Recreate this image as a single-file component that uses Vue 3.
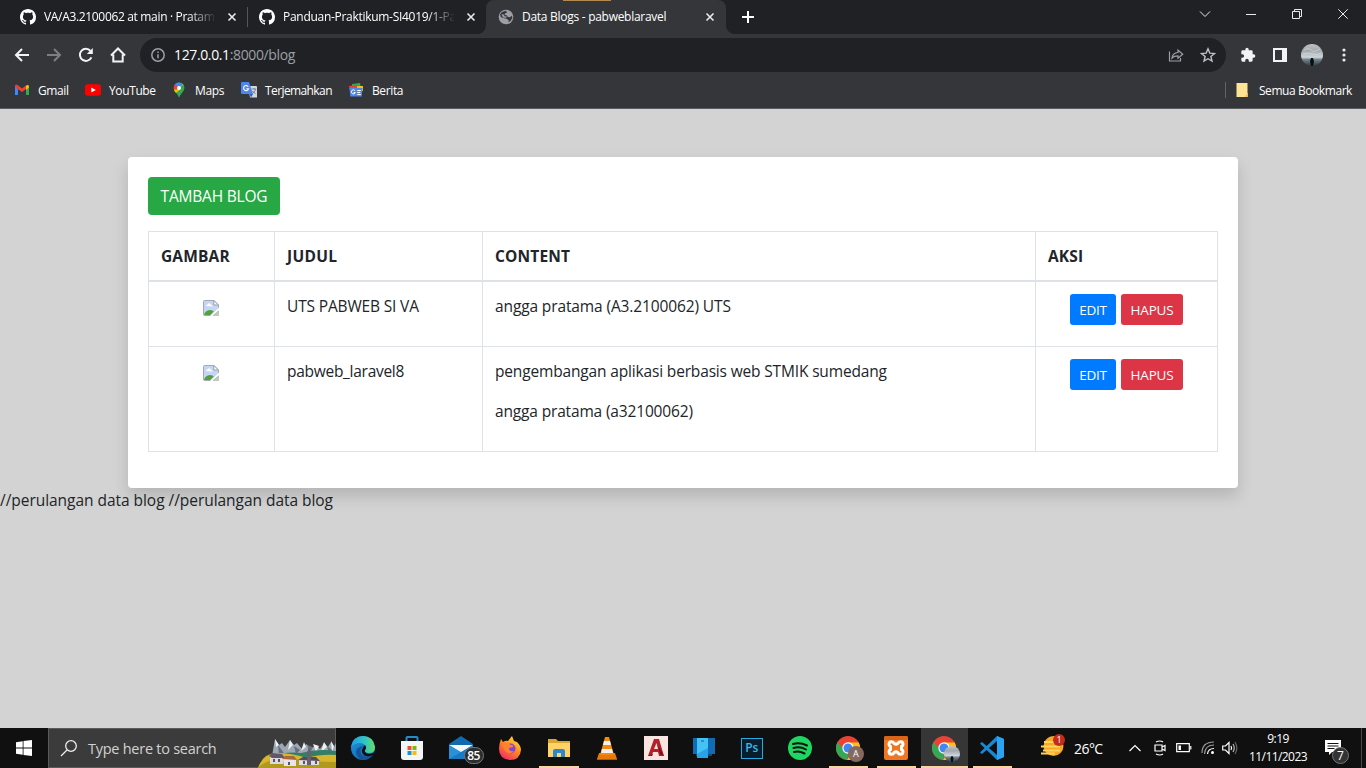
<script setup>
const blogs = [
  { title: 'UTS PABWEB SI VA', lines: [{ t: 'angga pratama (A3.2100062) UTS', w: 'l1' }] },
  {
    title: 'pabweb_laravel8',
    lines: [
      { t: 'pengembangan aplikasi berbasis web STMIK sumedang', w: 'l2' },
      { t: 'angga pratama (a32100062)', w: 'l3' },
    ],
  },
]
const github =
  'M8 0C3.58 0 0 3.58 0 8c0 3.54 2.29 6.53 5.47 7.59.4.07.55-.17.55-.38 0-.19-.01-.82-.01-1.49-2.01.37-2.53-.49-2.69-.94-.09-.23-.48-.94-.82-1.13-.28-.15-.68-.52-.01-.53.63-.01 1.08.58 1.23.82.72 1.21 1.87.87 2.33.66.07-.52.28-.87.51-1.07-1.78-.2-3.64-.89-3.64-3.95 0-.87.31-1.59.82-2.15-.08-.2-.36-1.02.08-2.12 0 0 .67-.21 2.2.82.64-.18 1.32-.27 2-.27s1.36.09 2 .27c1.53-1.04 2.2-.82 2.2-.82.44 1.1.16 1.92.08 2.12.51.56.82 1.27.82 2.15 0 3.07-1.87 3.75-3.65 3.95.29.25.54.73.54 1.48 0 1.07-.01 1.93-.01 2.2 0 .21.15.46.55.38A8.01 8.01 0 0 0 16 8c0-4.42-3.58-8-8-8z'
</script>

<template>
  <div class="screen">
    <header class="browser">
      <div class="tabs">
        <div class="tab first">
          <svg class="fav" viewBox="0 0 16 16"><path :d="github" fill="#fff" /></svg>
          <span class="tab-title fade t1">VA/A3.2100062 at main · Pratam</span>
          <svg class="close" viewBox="0 0 10 10"><path d="M1.500 1.500l7 7M8.500 1.500l-7 7" /></svg>
        </div>
        <div class="tab second">
          <svg class="fav" viewBox="0 0 16 16"><path :d="github" fill="#fff" /></svg>
          <span class="tab-title fade t2">Panduan-Praktikum-SI4019/1-Pa</span>
          <svg class="close" viewBox="0 0 10 10"><path d="M1.500 1.500l7 7M8.500 1.500l-7 7" /></svg>
        </div>
        <div class="tab active">
          <i class="accent"></i>
          <svg class="globe" viewBox="0 0 16 16">
            <circle cx="8" cy="8" r="7.300" fill="#9aa0a6" />
            <path d="M2 5.500L4 3l4-1.200 1 1.700-2 1-.5 1.500 2 .2L10 8l2 .3 1.800-1.600.6 2-1.900 3.300-2 1.200.2-2-2-1.500L5.500 9 3 8.200z" fill="#35363a" />
            <path d="M3.500 5.500l2-.2 1 2 2.500.2-1 1.200-3-.3z" fill="#9aa0a6" />
          </svg>
          <span class="tab-title t3">Data Blogs - pabweblaravel</span>
          <svg class="close" viewBox="0 0 10 10"><path d="M1.500 1.500l7 7M8.500 1.500l-7 7" /></svg>
        </div>
        <svg class="plus" viewBox="0 0 14 14"><path d="M7 1v12M1 7h12" stroke="#fff" stroke-width="2" /></svg>
        <div class="window-controls">
          <svg width="12" height="12" viewBox="0 0 12 12"><path d="M1 3.500L6 8.500l5-5" /></svg>
          <svg width="12" height="12" viewBox="0 0 12 12"><path d="M1 6.500h10" /></svg>
          <svg width="12" height="12" viewBox="0 0 12 12"><path d="M1.500 3.500h7v7h-7zM3.500 3.500v-2h7v7h-2" /></svg>
          <svg width="12" height="12" viewBox="0 0 12 12"><path d="M1.300 1.300l9.400 9.400M10.700 1.300l-9.400 9.400" /></svg>
        </div>
      </div>

      <div class="toolbar">
        <svg class="nav" viewBox="0 0 16 16"><path d="M15 8H2M8 2L2 8l6 6" stroke="#f1f3f4" /></svg>
        <svg class="nav" viewBox="0 0 16 16"><path d="M1 8h13M8 2l6 6-6 6" stroke="#7d7f83" /></svg>
        <svg class="nav" viewBox="0 0 16 16"><path d="M13.400 10.300A6 6 0 1 1 12.500 4" stroke="#f1f3f4" /><path d="M14.800 1v6H8.800z" fill="#f1f3f4" stroke="none" /></svg>
        <svg class="nav" viewBox="0 0 16 16"><path d="M1 8.500L8 1.500l7 7M3.300 7.500v7h9.400v-7" stroke="#f1f3f4" /></svg>
        <div class="address">
          <svg class="info" viewBox="0 0 14 14"><circle cx="7" cy="7" r="6.200" /><path d="M7 6.300v4M7 3.500v1.500" /></svg>
          <span class="url"><b>127.0.0.1</b>:8000/blog</span>
          <svg class="share" viewBox="0 0 16 16"><path d="M1.500 4.500v9.500h11v-3M4 11c.4-3.700 2.500-5.300 6-5.500V3l4.700 4.300L10 11.300V8.800C7.300 8.800 5.500 9.300 4 11z" /></svg>
          <svg class="star" viewBox="0 0 16 16"><path d="M8 1.800l1.800 4.300 4.700.4-3.600 3 1.100 4.600L8 11.700l-4 2.400 1.100-4.600-3.600-3 4.700-.4z" /></svg>
        </div>
        <svg class="puzzle" viewBox="0 0 24 24"><path d="M20.500 11H19V7a2 2 0 0 0-2-2h-4V3.500a2.500 2.500 0 0 0-5 0V5H4a2 2 0 0 0-2 2v3.800h1.500a2.700 2.700 0 0 1 0 5.400H2V20a2 2 0 0 0 2 2h3.800v-1.500a2.700 2.700 0 0 1 5.400 0V22H17a2 2 0 0 0 2-2v-4h1.500a2.500 2.500 0 0 0 0-5z" fill="#f1f3f4" /></svg>
        <svg class="panel" viewBox="0 0 14 14"><path d="M1 1h12v12H1z" fill="none" stroke="#f1f3f4" stroke-width="2" /><path d="M9 1h4v12H9z" fill="#f1f3f4" /></svg>
        <svg class="avatar" viewBox="0 0 22 22">
          <defs>
            <clipPath id="av"><circle cx="11" cy="11" r="11" /></clipPath>
            <linearGradient id="sky" x2="0" y2="1"><stop offset="0" stop-color="#bfc3c7" /><stop offset=".3" stop-color="#a3a8ae" /><stop offset=".6" stop-color="#cfd6da" /><stop offset=".7" stop-color="#77848d" /><stop offset="1" stop-color="#2a3942" /></linearGradient>
          </defs>
          <g clip-path="url(#av)"><path d="M0 0h22v22H0z" fill="url(#sky)" /><path d="M3 6q4-3 7 0t9-1M2 10q6-2 10 0t8-1" stroke="#d5d8da" fill="none" opacity=".7" /><path d="M10 14h2l1 3-1 5h-2l-1-5z" fill="#080d12" /></g>
        </svg>
        <svg class="dots" viewBox="0 0 4 14"><circle cx="2" cy="2" r="1.600" /><circle cx="2" cy="7" r="1.600" /><circle cx="2" cy="12" r="1.600" /></svg>
      </div>

      <div class="bookmarks">
        <div class="bm b1">
          <svg width="16" height="16" viewBox="0 0 16 16"><path d="M1 4v9h3V7z" fill="#4285f4" /><path d="M15 4v9h-3V7z" fill="#34a853" /><path d="M1 3.500Q2 2 3.500 3L8 6.500 12.500 3 12 7 8 10 1 5z" fill="#ea4335" /><path d="M12 4l1-1q2-.5 2 1.500v1L12 8z" fill="#fbbc04" /></svg><span>Gmail</span>
        </div>
        <div class="bm b2">
          <svg width="16" height="16" viewBox="0 0 16 16"><rect y="2.300" width="16" height="11.500" rx="3" fill="#f00" /><path d="M6.300 5.500v5L10.800 8z" fill="#fff" /></svg><span>YouTube</span>
        </div>
        <div class="bm b3">
          <svg width="16" height="16" viewBox="0 0 16 16"><path d="M8 .5A5.300 5.300 0 0 0 2.700 6C2.700 9 6 11 8 15.500 10 11 13.300 9 13.300 6A5.300 5.300 0 0 0 8 .5z" fill="#34a853" /><path d="M3 8L11.500 1.800 13 4 5 11Q3.500 9.500 3 8z" fill="#fbbc04" /><path d="M3.800 2.600L8 6l3.800-4A5.300 5.300 0 0 0 3.800 2.600z" fill="#4285f4" /><path d="M3.800 2.600Q2.500 4 2.800 7l3.300.8L8 6z" fill="#ea4335" /><path d="M8 6l4.200-3.400Q13.300 4 13.300 6T11 10.500L8 15V8z" fill="#34a853" /><circle cx="8" cy="6" r="2" fill="#fff" /></svg><span>Maps</span>
        </div>
        <div class="bm b4">
          <svg width="17" height="16" viewBox="0 0 17 16"><path d="M7 4h8.500l.5 1v10.500H9z" fill="#d4d7dc" /><path d="M0 1q0-1 1-1h7l4 12H1q-1 0-1-1z" fill="#4d86ec" /><path d="M8.500 12h3.500l-2 3.500z" fill="#2e5fbf" /><path d="M7.200 4.700A2.500 2.500 0 1 0 7.500 6.800H5.300" fill="none" stroke="#fff" stroke-width="1.100" /><path d="M10.700 7h4.500M13 6v1M14.500 7q-.5 3-3 4.500M11.500 9q1 1.800 3 2.500" fill="none" stroke="#66717c" stroke-width=".8" /></svg><span>Terjemahkan</span>
        </div>
        <div class="bm b5">
          <svg width="16" height="16" viewBox="0 0 16 16"><path d="M4 2l8-1 1 6H4z" fill="#34a853" /><path d="M1 4l9-1 1 6H2z" fill="#ea4335" /><path d="M9 4l6 0v5H9z" fill="#fbbc04" /><path d="M1.500 6h13l-.8 8.500H2.300z" fill="#4d8af0" /><path d="M7 8.700A2 2 0 1 0 7.300 10.500H5.700M9.300 8.500h3.500M9.300 10.500h3M9.300 12.500h3.500" stroke="#fff" fill="none" /></svg><span>Berita</span>
        </div>
        <div class="all">
          <svg width="13" height="14" viewBox="0 0 13 14"><path d="M.5 0h11v10.500H12V14H.5z" fill="#ffe394" /><path d="M9.500 14v-1l2-2.500h.5V14z" fill="#e8bd54" /></svg>
          <span>Semua Bookmark</span>
        </div>
      </div>
    </header>

    <main>
      <section class="card">
        <button class="btn add">TAMBAH BLOG</button>
        <table>
          <colgroup><col class="c1" /><col class="c2" /><col class="c3" /><col class="c4" /></colgroup>
          <thead>
            <tr><th>GAMBAR</th><th class="h2">JUDUL</th><th>CONTENT</th><th>AKSI</th></tr>
          </thead>
          <tbody>
            <tr v-for="(b, i) in blogs" :key="b.title">
              <td class="mid">
                <svg class="broken" viewBox="0 0 16 16">
                  <path d="M1.500.5h9.300l4.700 4.500v5L8.500 15.500h-7q-1 0-1-1v-13q0-1 1-1z" fill="#c4d6f4" stroke="#a5a8ad" />
                  <path d="M3 6q0-1.500 1.500-1.500Q6.500 2 8 5q1.500 0 1.500 1.500z" fill="#fff" />
                  <path d="M1 15q1-4.500 6-5 3 0 3.800 1.500L7.300 15z" fill="#55a03c" />
                  <path d="M10.800.5v4.500h4.700z" fill="#fff" stroke="#9a9da3" />
                  <path d="M16 7.500L7 16h2.500L16 10z" fill="#fff" /><path d="M15.500 11v4.500H10z" fill="#bccfb5" stroke="#b0b4b5" stroke-width=".7" />
                </svg>
              </td>
              <td><span :class="'title' + i">{{ b.title }}</span></td>
              <td><p v-for="l in b.lines" :key="l.t" :class="l.w">{{ l.t }}</p></td>
              <td class="mid"><div class="actions"><button class="btn sm edit">EDIT</button><button class="btn sm del">HAPUS</button></div></td>
            </tr>
          </tbody>
        </table>
      </section>
      <div class="note">//perulangan data blog //perulangan data blog</div>
    </main>

    <footer class="taskbar">
      <div class="start"><svg width="16" height="16" viewBox="0 0 16 16"><path d="M0 2.200l6.700-1v6.300H0zM7.500 1.100L16 0v7.500H7.500zM0 8.400h6.700v6.400L0 13.800zM7.500 8.400H16V16l-8.500-1.100z" fill="#fff" /></svg></div>
      <div class="search">
        <svg width="18" height="18" viewBox="0 0 18 18"><circle cx="11" cy="7" r="5.300" fill="none" stroke="#eee" stroke-width="1.300" /><path d="M7 11L1 17" stroke="#eee" stroke-width="1.300" /></svg>
        <span>Type here to search</span>
        <svg class="scene" viewBox="0 0 78 30">
          <path d="M14 18l3-17 4 6 3-2 3 4 5-7 4 5 3-2 5 6 4-5 6 4 4-3 4 4 4-6 4 4 3-5 3 5 2-4v24H14z" fill="#9da8b2" />
          <path d="M17 1l1 8 3-2zM32 2l-2 10 5-5zM46 4l-3 9 5-4zM55 6l3 8 3-6zM66 4l-3 10 6-5zM73 3l1 12 2-7z" fill="#edf1f4" />
          <path d="M20 7l1 10 5-2zM36 8l2 8 4-4zM49 7l3 8 3-6zM69 8l2 8 3-4z" fill="#63717d" />
          <path d="M9 20q18-7 34-5 17-5 35-2v17H5z" fill="#347e68" />
          <path d="M0 30Q5 15 19 15t30 5q13-4 29-3v13z" fill="#d8b62c" />
          <path d="M0 30q10-11 33-9 24 3 45 3v6z" fill="#b19920" />
          <path d="M12 18l9-1 4 3v6H12z" fill="#ddd9df" /><path d="M11 18l3-3 10 1 3 4H14z" fill="#635767" />
          <path d="M25 21h13v7H26z" fill="#e8e4e7" /><path d="M24 21l3-3h9l3 4z" fill="#a9693e" />
          <path d="M41 22h20v5H41z" fill="#dfdde2" /><path d="M40 22l5-3h13l4 4z" fill="#524b60" /><path d="M49 22v-7l2-6 2 6v12h-4z" fill="#65606c" />
          <path d="M15 21h2v3h-2M20 21h2v3h-2M30 24h2v3h-2M45 23h2v3h-2M57 23h2v3h-2" fill="#575565" />
        </svg>
      </div>

      <div class="apps">
        <div class="app w"><svg width="24" height="24" viewBox="0 0 24 24">
          <defs><linearGradient id="eg" x2="1"><stop stop-color="#209ce8" /><stop offset=".6" stop-color="#32c6c0" /><stop offset="1" stop-color="#66df61" /></linearGradient><linearGradient id="eb" x2="1" y2="1"><stop stop-color="#1c98de" /><stop offset="1" stop-color="#1259a8" /></linearGradient></defs>
          <circle cx="12" cy="12" r="12" fill="url(#eb)" />
          <path d="M0 11Q2 0 12 0t12 11q0 6-6 6-5 0-4-3 2-2 0-5Q8 4 0 11z" fill="url(#eg)" />
          <path d="M13 10q-5 2-3 8 4 5 12 0-4 6-11 6-5-2-6-8 0-5 8-6z" fill="#175496" />
          <path d="M14 9q2 3 0 5-1 3 4 4 3 0 6-2l-2 3q-7 3-10-1-3-4 2-9z" fill="#101010" />
        </svg></div>
        <div class="app w"><svg width="24" height="24" viewBox="0 0 24 24"><path d="M6.500 7V2q0-1 1-1h9q1 0 1 1v5" fill="none" stroke="#258ccc" stroke-width="2" /><path d="M1 5h22v16q0 3-3 3H4q-3 0-3-3z" fill="#f3f5f7" /><path d="M7.500 10h4v4h-4z" fill="#e75331" /><path d="M12.500 10h4v4h-4z" fill="#7fba00" /><path d="M7.500 15h4v4h-4z" fill="#1693d6" /><path d="M12.500 15h4v4h-4z" fill="#fdb913" /></svg></div>
        <div class="app w"><svg width="24" height="24" viewBox="0 0 24 24"><path d="M0 8L12 0l12 8v15H0z" fill="#116aae" /><path d="M0 9h24L12 17z" fill="#f2f6f9" /><path d="M0 9l24 14H0z" fill="#2b91d7" /><path d="M24 9L12 16 0 23h24z" fill="#177ac2" /></svg><span class="badge">85</span></div>
        <div class="app w"><svg width="24" height="24" viewBox="0 0 24 24">
          <defs><linearGradient id="ff" x1=".8" x2=".2" y2="1"><stop stop-color="#ffe537" /><stop offset=".45" stop-color="#ff8b23" /><stop offset="1" stop-color="#f3246b" /></linearGradient></defs>
          <path d="M3 3l2 3q3-2 5-1l4-5 2 5 3 1q4 4 4 8-1 10-11 10Q1 23 1 13q0-5 2-10z" fill="url(#ff)" /><circle cx="12.500" cy="12.500" r="5" fill="#8245d0" /><path d="M4 8q4-3 9 1 3 0 2 2l-4 1q0 4 5 3-3 4-8 1Q5 12 4 8z" fill="#ff822c" />
        </svg></div>
        <div class="app w run"><svg width="24" height="22" viewBox="0 0 24 22"><path d="M1 2h8l2 2h12v15H1z" fill="#dca52e" /><path d="M1 6h22v14H1z" fill="#ffd366" /><path d="M6 20v-6q0-2 2-2h8q2 0 2 2v6h-4v-4h-4v4z" fill="#2e86cd" /></svg></div>
        <div class="app w"><svg width="22" height="24" viewBox="0 0 22 24"><path d="M3 17h16l2 6H1z" fill="#e87908" /><path d="M9 1h4l5 18H4z" fill="#f58a12" /><path d="M8 5h6l1 4H7zM6 13h10l1 4H5z" fill="#f3f1ed" /><path d="M1 23h20v1H1z" fill="#b75504" /></svg></div>
        <div class="app"><svg width="24" height="24" viewBox="0 0 24 24"><path d="M0 0h24v24H0z" fill="#f8e5e2" /><path d="M4 20L10 3h5l5 17h-5l-1-4H9l-1 4zM10 13h4l-1.500-6z" fill="#b72028" fill-rule="evenodd" /><path d="M4 20l5-2-1 2zM14 9l6 11-4-2z" fill="#761319" /></svg></div>
        <div class="app"><svg width="24" height="24" viewBox="0 0 24 24"><path d="M1 2h22v16H1z" fill="#116bb5" /><path d="M4 18h16v2H4z" fill="#0b4e86" /><path d="M5 2h11v20H5z" fill="#28a3e8" /><path d="M5 2h11v10L5 18z" fill="#43c2f3" /><path d="M9 5h3" stroke="#0b609b" /></svg></div>
        <div class="app"><div class="ps">Ps</div></div>
        <div class="app"><svg width="24" height="24" viewBox="0 0 24 24"><circle cx="12" cy="12" r="12" fill="#1ed760" /><path d="M5 8q7-2 14 1.500M5.500 12q6.500-2 12.500 1.500M6 16q5-1.500 10.500 1.500" stroke="#101010" stroke-width="2" stroke-linecap="round" fill="none" /></svg></div>
        <div class="app run"><svg width="24" height="24" viewBox="0 0 24 24"><circle cx="12" cy="12" r="12" fill="#ea4335" /><path d="M1.600 6L8 14l4 4 -1 6A12 12 0 0 1 1.600 6z" fill="#34a853" /><path d="M12 6.500h10.700A12 12 0 0 1 11 24l6-9z" fill="#fbc116" /><circle cx="12" cy="12" r="5.700" fill="#fff" /><circle cx="12" cy="12" r="4.500" fill="#4285f4" /></svg><span class="person">A</span></div>
        <div class="app run"><svg width="24" height="24" viewBox="0 0 24 24"><rect width="24" height="24" rx="2" fill="#ef7622" /><path d="M0 2q0-2 2-2h20q2 0 2 2v2H0z" fill="#d9651a" /><path d="M10 7.300q-.5-1.500-2.500-1.500-2.500 0-2.500 2.700 0 1.300 1.500 1.800v3.400Q5 14.200 5 15.500q0 2.700 2.500 2.700 2 0 2.500-1.500l2-1 2 1q.5 1.500 2.500 1.500 2.500 0 2.500-2.700 0-1.300-1.500-1.800v-3.400Q19 9.800 19 8.500q0-2.700-2.500-2.700-2 0-2.500 1.500l-2 1z" fill="none" stroke="#fff" stroke-width="3" stroke-linejoin="round" /></svg></div>
        <div class="app run current"><svg width="24" height="24" viewBox="0 0 24 24"><circle cx="12" cy="12" r="12" fill="#ea4335" /><path d="M1.600 6L8 14l4 4 -1 6A12 12 0 0 1 1.600 6z" fill="#34a853" /><path d="M12 6.500h10.700A12 12 0 0 1 11 24l6-9z" fill="#fbc116" /><circle cx="12" cy="12" r="5.700" fill="#fff" /><circle cx="12" cy="12" r="4.500" fill="#4285f4" /></svg>
          <svg class="mini" viewBox="0 0 22 22"><g clip-path="url(#av)"><path d="M0 0h22v22H0z" fill="url(#sky)" /><path d="M10 14h2l1 3-1 5h-2l-1-5z" fill="#080d12" /></g></svg></div>
        <div class="app run"><svg width="24" height="24" viewBox="0 0 24 24"><path d="M17 0l7 3v18l-7 3L2 9.500l-2-2L2 6l15 13V5L2 18l-2-1.500 2-2z" fill="#1789d5" /><path d="M17 0l7 3v18l-7 3z" fill="#2aa4f2" /></svg></div>
      </div>

      <div class="weather">
        <svg width="24" height="22" viewBox="0 0 24 22"><circle cx="12.500" cy="11" r="10" fill="#f9a825" /><path d="M3 7h13M0 11.500h19M2 15.500h17M0 18.500h14" stroke="#ffd45c" stroke-width="1.800" /></svg>
        <span class="alert">1</span>
      </div>
      <span class="temp">26°C</span>
      <svg class="tray up" viewBox="0 0 12 12"><path d="M.5 9L6 3.500 11.500 9" /></svg>
      <svg class="tray cam" viewBox="0 0 14 16"><path d="M3 2q4-2 7 0M3 14q4 2 7 0M2 5h7v6H2zM9 7l3-1.500v5L9 9" /></svg>
      <svg class="tray bat" viewBox="0 0 16 10"><path d="M.7.7h12.600v8H.7zM14.800 3v3.500" /><path d="M2.500 2.500H5v4.500H2.500z" fill="#fff" stroke="none" /></svg>
      <svg class="tray wifi" viewBox="0 0 14 14"><g stroke="#9c9c9c"><path d="M1 12Q1 1 13 1M3.500 13Q4 4 13 4" /></g><path d="M6.500 13Q7 7.500 13 7.500" /><circle cx="11.500" cy="11.500" r="1.500" fill="#fff" stroke="none" /></svg>
      <svg class="tray vol" viewBox="0 0 16 14"><path d="M.7 5h2.800L7 1.500v11L3.500 9H.7zM9 5q1.200 2 0 4" /><path d="M11 3q2.500 4 0 8" stroke="#bbb" /><path d="M13 1q3.700 6 0 12" stroke="#666" /></svg>
      <div class="clock"><span>9:19</span><span>11/11/2023</span></div>
      <div class="notif"><svg width="16" height="16" viewBox="0 0 16 16"><path d="M0 0h16v12h-9l-3 3v-3H0z" fill="#fff" /><path d="M2.500 3.500h11M2.500 6h11M2.500 8.500h7" stroke="#111" /></svg><span class="count">7</span></div>
      <i class="peek"></i>
    </footer>
  </div>
</template>

<style>
body { margin: 0; overflow: hidden; }
</style>

<style scoped>
* { box-sizing: border-box; }
.screen { width: 1366px; height: 768px; display: flex; flex-direction: column; overflow: hidden; font-family: "Open Sans", "Noto Sans", sans-serif; background: #d3d3d3; }
svg { display: block; flex: none; }
span { white-space: nowrap; }
.browser { height: 109px; flex: none; background: #35363a; border-bottom: 1px solid #5b5c60; color: #fff; }
.tabs { height: 34px; background: #202124; display: flex; align-items: center; }
.tab { height: 34px; display: flex; align-items: center; position: relative; }
.first { width: 247px; padding-left: 20px; }
.second { width: 239px; padding-left: 12px; }
.first::after { content: ""; position: absolute; right: -1px; top: 7px; height: 20px; width: 1px; background: #54565a; }
.active { width: 240px; padding-left: 12px; background: #35363a; border-radius: 8px 8px 0 0; }
.active::before, .active::after { content: ""; position: absolute; bottom: 0; width: 8px; height: 8px; }
.active::before { left: -8px; background: radial-gradient(circle at 0 0, #202124 7.500px, #35363a 8px); }
.active::after { right: -8px; background: radial-gradient(circle at 100% 0, #202124 7.500px, #35363a 8px); }
.accent { position: absolute; left: 77px; top: 0; width: 48px; height: 1px; background: #b38b52; }
.fav, .globe { width: 16px; height: 16px; }
.tab-title { font-size: 12px; line-height: 16px; margin-left: 8px; width: 171px; }
.active .tab-title { width: 180px; }
.fade { -webkit-mask-image: linear-gradient(90deg, #000 84%, transparent 101%); mask-image: linear-gradient(90deg, #000 84%, transparent 101%); }
.t1 { letter-spacing: -0.33px; }
.t2 { letter-spacing: -0.29px; }
.t3 { letter-spacing: -0.28px; }
.close { width: 10px; height: 10px; margin-left: 12px; stroke: #e8eaed; stroke-width: 1.600; }
.active .close { margin-left: 3px; }
.plus { width: 14px; height: 14px; margin-left: 15px; }
.window-controls { margin-left: auto; display: flex; align-items: center; gap: 34px; padding: 0 17px 6px 0; }
.window-controls svg { fill: none; stroke: #e8eaed; stroke-width: 1; }
.toolbar { height: 42px; display: flex; align-items: center; padding-left: 14px; }
.nav { width: 16px; height: 16px; margin-right: 16px; fill: none; stroke-width: 2; }
.address { width: 1086px; height: 34px; margin-left: -2px; border-radius: 17px; background: #202124; display: flex; align-items: center; padding: 0 10px 0 11px; }
.info { width: 14px; height: 14px; fill: none; stroke: #9aa0a6; stroke-width: 1.500; }
.url { font-size: 14px; line-height: 20px; margin-left: 9px; color: #9aa0a6; letter-spacing: -0.37px; }
.url b { color: #fff; font-weight: 400; }
.share { width: 16px; height: 16px; margin-left: auto; fill: none; stroke: #9aa0a6; stroke-width: 1.200; }
.star { width: 16px; height: 16px; margin-left: 16px; fill: none; stroke: #bdc1c6; stroke-width: 1.400; }
.puzzle { width: 16px; height: 16px; margin-left: 14px; }
.panel { width: 14px; height: 14px; margin-left: 17px; }
.avatar { width: 22px; height: 22px; margin-left: 14px; }
.dots { width: 4px; height: 14px; margin-left: 19px; fill: #e8eaed; }
.bookmarks { height: 32px; padding-bottom: 4px; display: flex; align-items: center; padding-left: 14px; font-size: 12px; }
.bm { display: flex; align-items: center; }
.bm span { margin-left: 8px; letter-spacing: -0.38px; }
.b1 { width: 71px; } .b2 { width: 86px; } .b3 { width: 70px; } .b4 { width: 107px; }
.bm.b4 span { margin-left: 7px; letter-spacing: -0.6px; }
.all { margin-left: auto; display: flex; align-items: center; margin-right: 14px; padding-left: 10px; border-left: 1px solid #5f6368; height: 16px; }
.all span { margin-left: 10px; letter-spacing: -0.43px; }

main { flex: 1; padding-top: 48px; font-size: 15.500px; line-height: 24px; color: #212529; }
.card { width: 1110px; height: 331px; margin: 0 auto; padding: 20px; background: #fff; border-radius: 4px; box-shadow: 0 8px 16px rgba(0, 0, 0, .15); position: relative; }
.btn { border: 0; border-radius: 4px; color: #fff; font-family: inherit; padding: 0; white-space: nowrap; display: block; }
.add { width: 132px; height: 38px; background: #28a745; font-size: 15.500px; letter-spacing: -0.2px; margin-bottom: 16px; }
table { width: 1069px; table-layout: fixed; border-collapse: collapse; }
.c1 { width: 126px; } .c2 { width: 208px; } .c3 { width: 553px; } .c4 { width: 182px; }
th, td { border: 1px solid #dee2e6; padding: 12px; text-align: left; vertical-align: top; }
th { border-bottom-width: 2px; font-weight: 700; letter-spacing: 0.15px; }
.h2 { letter-spacing: 0.3px; }
td p { margin: 0 0 16px; }
.title0, .l2, .l3 { letter-spacing: -0.16px; }
.title1 { letter-spacing: -0.28px; }
.l1 { letter-spacing: -0.12px; }
td.mid { text-align: center; }
.broken { width: 16px; height: 16px; margin: 6px 0 0 42px; }
.actions { display: flex; gap: 5px; justify-content: center; }
.sm { height: 31px; font-size: 13.500px; border-radius: 3px; letter-spacing: -0.2px; }
.edit { width: 46px; background: #007bff; }
.del { width: 62px; background: #dc3545; }
.note { letter-spacing: -0.04px; white-space: nowrap; }

.taskbar { height: 40px; flex: none; background: #101010; display: flex; align-items: center; color: #fff; }
.start { width: 48px; height: 40px; display: flex; align-items: center; justify-content: center; }
.search { width: 288px; height: 40px; background: #3b3b3b; border: 1px solid #5a5a5a; display: flex; align-items: center; padding-left: 11px; position: relative; }
.search span { font-size: 14.500px; margin-left: 10px; color: #d2d2d2; letter-spacing: -0.26px; }
.scene { position: absolute; right: -1px; bottom: -1px; width: 78px; height: 30px; }
.apps { display: flex; margin-left: 3px; height: 40px; width: 679px; }
.app { width: 48px; height: 40px; display: flex; align-items: center; justify-content: center; position: relative; }
.w { width: 48.800px; }
.run::after { content: ""; position: absolute; bottom: 0; left: 5px; right: 4px; height: 2px; background: #f9d3a5; }
.current { background: linear-gradient(#363636, #363636) 1px 0 no-repeat; }
.current::after { left: 1px; right: 0; }
.badge { position: absolute; left: 27px; top: 19px; width: 20px; height: 17px; border: 1px solid #777; background: #2b2d30; border-radius: 9px; font-size: 12px; line-height: 15px; text-align: center; font-weight: 600; letter-spacing: -0.4px; }
.ps { width: 22px; height: 21px; border: 1.500px solid #2ba9df; background: #061e2e; color: #39b7ee; font-size: 12px; line-height: 18px; text-align: center; font-weight: 600; }
.person { position: absolute; left: 24px; top: 18px; width: 16px; height: 16px; border-radius: 50%; background: #84695f; font-size: 9px; line-height: 16px; text-align: center; }
.mini { position: absolute; left: 24px; top: 18px; width: 16px; height: 16px; }
.weather { width: 24px; margin-left: 23px; position: relative; top: -2px; }
.alert { position: absolute; left: 12px; top: -1px; width: 12px; height: 12px; border-radius: 50%; background: #c42b1c; font-size: 9px; line-height: 12px; text-align: center; }
.temp { font-size: 14px; margin-left: 9px; width: 55px; letter-spacing: -0.55px; }
.tray { fill: none; stroke: #fff; stroke-width: 1.200; }
.up { width: 12px; height: 12px; }
.cam { width: 14px; height: 16px; margin-left: 12px; }
.bat { width: 16px; height: 10px; margin-left: 9px; }
.wifi { width: 14px; height: 14px; margin-left: 9px; }
.vol { width: 16px; height: 14px; margin-left: 7px; }
.clock { width: 70px; margin-left: 5px; display: flex; flex-direction: column; align-items: center; font-size: 12px; line-height: 18px; letter-spacing: -0.58px; }
.notif { position: relative; margin-left: 12px; width: 16px; }
.count { position: absolute; left: 7px; top: 7px; width: 17px; height: 17px; border-radius: 50%; border: 1px solid #777; background: #333; font-size: 12px; line-height: 15px; text-align: center; }
.peek { margin-left: auto; width: 1px; height: 40px; background: #4a4a4a; margin-right: 4px; }
</style>
